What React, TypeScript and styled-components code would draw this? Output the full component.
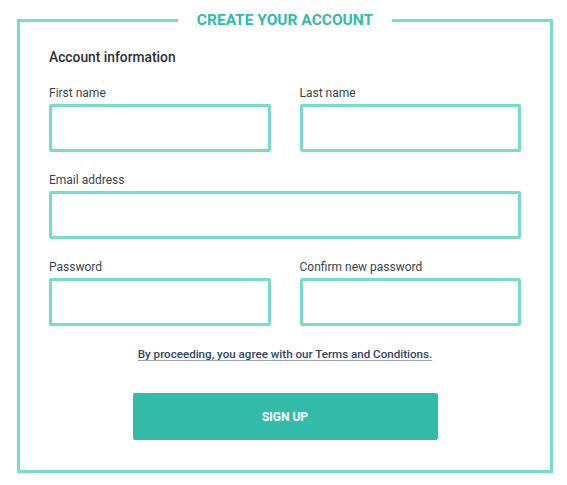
import React from 'react';
import styled, { createGlobalStyle } from 'styled-components';

const GlobalStyle = createGlobalStyle`
  * {
    box-sizing: border-box;
  }
  body {
    margin: 0;
    background: #ffffff;
    font-family: Roboto, "Liberation Sans", Arial, sans-serif;
  }
`;

const Page = styled.div`
  padding: 11px 0 0 17px;
`;

const Frame = styled.fieldset`
  width: 536px;
  margin: 0;
  padding: 18px 29px 30px;
  border: 3px solid #76dccb;
  min-width: 0;
`;

const Legend = styled.legend`
  margin: 0 auto;
  padding: 0 19px;
  font-size: 15.5px;
  line-height: 18px;
  font-weight: 700;
  color: #2fbca8;
  text-transform: uppercase;
`;

const SectionTitle = styled.h2`
  margin: 0 0 19px;
  font-size: 13.8px;
  line-height: 20px;
  font-weight: 500;
  color: #2b2f38;
`;

const Row = styled.div<{ columns: number }>`
  display: grid;
  grid-template-columns: repeat(${p => p.columns}, 1fr);
  column-gap: 29px;
  margin-bottom: 21px;
`;

const Field = styled.label`
  display: flex;
  flex-direction: column;
  gap: 4px;
`;

const Label = styled.span`
  font-size: 12px;
  line-height: 14px;
  color: #3a3f4b;
`;

const Input = styled.input`
  height: 48px;
  width: 100%;
  border: 3px solid #76dccb;
  border-radius: 2px;
  padding: 0 10px;
  font-family: inherit;
  font-size: 14px;
  background: #ffffff;
  outline: none;
`;

const Terms = styled.a`
  display: block;
  margin: 0 auto;
  width: fit-content;
  font-size: 11.6px;
  line-height: 14px;
  font-weight: 500;
  color: #34445e;
  text-decoration: underline;
  text-decoration-color: #9aa3af;
  text-underline-offset: 2px;
  cursor: pointer;
`;

const Actions = styled.div`
  display: flex;
  justify-content: center;
  margin-top: 32px;
`;

const SubmitButton = styled.button`
  width: 305px;
  height: 47px;
  border: none;
  border-radius: 2px;
  background: #33bba9;
  color: #ffffff;
  font-family: inherit;
  font-size: 12px;
  font-weight: 700;
  text-transform: uppercase;
  cursor: pointer;
`;

const fields = {
  names: [
    { id: 'first', label: 'First name', type: 'text' },
    { id: 'last', label: 'Last name', type: 'text' },
  ],
  email: [{ id: 'email', label: 'Email address', type: 'email' }],
  passwords: [
    { id: 'password', label: 'Password', type: 'password' },
    { id: 'confirm', label: 'Confirm new password', type: 'password' },
  ],
};

type FieldDef = { id: string; label: string; type: string };

const FieldRow: React.FC<{ items: FieldDef[] }> = ({ items }) => (
  <Row columns={items.length}>
    {items.map(f => (
      <Field key={f.id}>
        <Label>{f.label}</Label>
        <Input type={f.type} name={f.id} />
      </Field>
    ))}
  </Row>
);

const App: React.FC = () => {
  return (
    <Page>
      <GlobalStyle />
      <Frame>
        <Legend>Create your account</Legend>
        <SectionTitle>Account information</SectionTitle>
        <FieldRow items={fields.names} />
        <FieldRow items={fields.email} />
        <FieldRow items={fields.passwords} />
        <Terms>By proceeding, you agree with our Terms and Conditions.</Terms>
        <Actions>
          <SubmitButton>Sign up</SubmitButton>
        </Actions>
      </Frame>
    </Page>
  );
};

export default App;
